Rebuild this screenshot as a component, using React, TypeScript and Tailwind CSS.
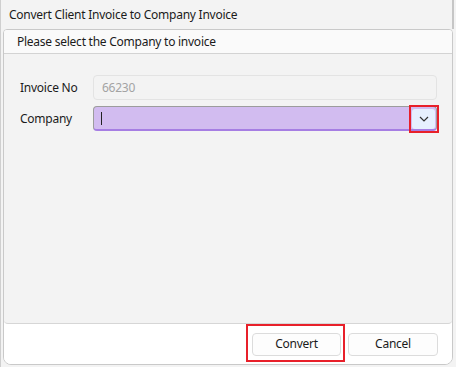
import React from "react";

export default function App() {
  return (
    <div
      className="w-[456px] h-[367px] bg-[#f3f3f3] flex flex-col overflow-hidden text-[12px] tracking-[-0.25px] text-[#1b1b1b] border-l border-[#cfcfcf]"
      style={{ fontFamily: '"Noto Sans", "Liberation Sans", sans-serif' }}
    >
      <div className="h-[29px] pl-[8px] flex items-center shrink-0 mr-[2px] border-r-2 border-[#c6c6c6]">
        <span className="leading-none">Convert Client Invoice to Company Invoice</span>
      </div>
      <div className="flex-1 ml-[2px] mr-[3px] mb-[2px] border border-[#c9c9c9] rounded-t-[4px] rounded-b-[8px] flex flex-col overflow-hidden bg-white">
        <div className="h-[24px] shrink-0 bg-[#fafafa] border-b border-[#d3d3d3] pl-[13px] flex items-center">
          <span className="leading-none">Please select the Company to invoice</span>
        </div>
        <div className="flex-1 bg-[#f3f3f3] border-b border-[#d6d6d6] rounded-b-[4px] pt-[21px] pl-[16px] pr-[15px] flex flex-col gap-[6px]">
          <div className="flex items-center h-[25px]">
            <span className="w-[73px] leading-none">Invoice No</span>
            <div className="flex-1 h-[25px] border border-[#e3e3e3] rounded-[4px] bg-[#f3f3f3] flex items-center pl-[8px] text-[#a3a3a3]">
              66230
            </div>
          </div>
          <div className="flex items-center h-[25px]">
            <span className="w-[73px] leading-none">Company</span>
            <div className="relative flex-1 h-[25px] rounded-[4px] bg-[#d2bcf0] border border-[#9c9c9c] border-b-[2px] border-b-[#a67ee3] flex items-center pl-[7px]">
              <div className="w-px h-[13px] bg-[#222]" />
              <div className="absolute right-[1px] top-[2px] w-[23px] h-[20px] rounded-[3px] bg-[#e6f0ff] flex items-center justify-center">
                <svg width="10" height="6" viewBox="0 0 10 6">
                  <path d="M1 1 L5 5 L9 1" fill="none" stroke="#333" strokeWidth="1.2" />
                </svg>
              </div>
              <div className="absolute right-[-3px] top-[-2px] w-[30px] h-[28px] border-2 border-[#e8202a]" />
            </div>
          </div>
        </div>
        <div className="h-[40px] shrink-0 bg-white flex items-center justify-end gap-[7px] pr-[14px]">
          <div className="relative">
            <button className="w-[89px] h-[23px] rounded-[4px] border border-[#dcdcdc] bg-[#fdfdfd] text-[#1b1b1b]">
              Convert
            </button>
            <div className="absolute left-[-6px] top-[-9px] w-[99px] h-[38px] border-2 border-[#e8202a]" />
          </div>
          <button className="w-[90px] h-[23px] rounded-[4px] border border-[#dcdcdc] bg-[#fdfdfd] text-[#1b1b1b]">
            Cancel
          </button>
        </div>
      </div>
    </div>
  );
}
